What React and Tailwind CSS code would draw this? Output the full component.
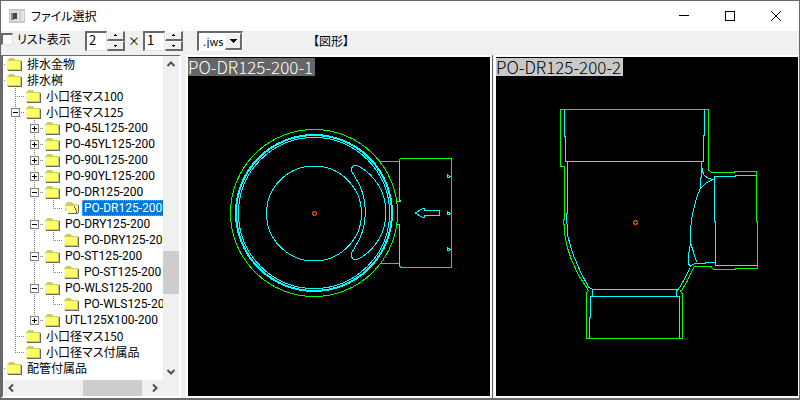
import React, { useState } from 'react';
import clsx from 'clsx';

// guides: one letter per indent column ("v" line through, "t" branch, "l" last branch, " " blank)
const treeRows = [
    { label: '排水金物', guides: '' },
    { label: '排水桝', guides: '' },
    { label: '小口径マス100', guides: 't' },
    { label: '小口径マス125', guides: 't', box: '-' },
    { label: 'PO-45L125-200', guides: 'vt', box: '+' },
    { label: 'PO-45YL125-200', guides: 'vt', box: '+' },
    { label: 'PO-90L125-200', guides: 'vt', box: '+' },
    { label: 'PO-90YL125-200', guides: 'vt', box: '+' },
    { label: 'PO-DR125-200', guides: 'vt', box: '-' },
    { label: 'PO-DR125-200', guides: 'vvl', open: true },
    { label: 'PO-DRY125-200', guides: 'vt', box: '-' },
    { label: 'PO-DRY125-200', guides: 'vvl' },
    { label: 'PO-ST125-200', guides: 'vt', box: '-' },
    { label: 'PO-ST125-200', guides: 'vvl' },
    { label: 'PO-WLS125-200', guides: 'vt', box: '-' },
    { label: 'PO-WLS125-200', guides: 'vvl' },
    { label: 'UTL125X100-200', guides: 'vl', box: '+' },
    { label: '小口径マス150', guides: 't' },
    { label: '小口径マス付属品', guides: 'l' },
    { label: '配管付属品', guides: '' },
];

const Guide = ({ kind, box }) => (
    <svg width="19" height="16" viewBox="0 0 19 16" fill="none" shapeRendering="crispEdges" className="block shrink-0">
        <g stroke="#808080" strokeDasharray="1 1">
            {kind !== ' ' && <path d={kind === 'l' ? 'M9.5 0V9' : 'M9.5 0V16'} />}
            {(kind === 't' || kind === 'l') && <path d="M9 8.5H19" />}
        </g>
        {box && (
            <>
                <rect x="5.5" y="4.5" width="8" height="8" fill="#fff" stroke="#808080" />
                <path d={box === '+' ? 'M7 8.5H12M9.5 6V11' : 'M7 8.5H12'} stroke="#000" />
            </>
        )}
    </svg>
);

const Folder = ({ open }) => (
    <svg width="17" height="14" viewBox="0 0 17 14" shapeRendering="crispEdges" className="block shrink-0">
        {open ? (
            <>
                <path d="M2 3H3V2H4V1H9V2H10V3H14V12H5L2 8Z" fill="#cccc66" />
                <path d="M1 5H11V6H12V8H13V10H14V12H5V11H4V9H3V7H2V6H1Z" fill="#ffff99" />
                <path d="M11 4H14V10H13V8H12V6H11Z" fill="#ffff66" />
                <path d="M15.5 4V12M5 12.5H15" fill="none" stroke="#666" />
                <path d="M11.5 5V7M12.5 7V9M13.5 9V12" fill="none" stroke="#666633" />
            </>
        ) : (
            <>
                <path d="M1 3H2V2H3V1H8V2H9V3H15V13H1Z" fill="#cccc66" />
                <rect x="2" y="5" width="12" height="7" fill="#ffff66" />
                <path d="M1 4.5H14M1.5 4V12" stroke="#fff" strokeOpacity=".7" />
                <path d="M15.5 4V14M2 13.5H16" stroke="#666" />
            </>
        )}
    </svg>
);

const TreeRow = ({ row, selected, onSelect }) => {
    const last = row.guides.length - 1;
    return (
        <li className="flex h-4 items-center" role="treeitem" aria-selected={selected}>
            <svg width="3" height="16" shapeRendering="crispEdges" className="block shrink-0">
                {last < 0 && <path d="M1 8.5H3" stroke="#808080" strokeDasharray="1 1" />}
            </svg>
            {row.guides.split('').map((kind, i) =>
                i === last && row.box ? (
                    <button key={i} type="button" aria-label={row.box === '+' ? '展開' : '折りたたむ'}>
                        <Guide kind={kind} box={row.box} />
                    </button>
                ) : (
                    <Guide key={i} kind={kind} />
                )
            )}
            <Folder open={row.open} />
            <button
                type="button"
                onClick={onSelect}
                className={clsx(
                    'ml-0.5 h-4 whitespace-nowrap px-0.5 text-xs leading-4',
                    last > 0 ? "font-['Roboto',sans-serif]" : "[font-feature-settings:'palt']",
                    selected && 'bg-[#0078d7] text-white outline-1 -outline-offset-1 outline-dotted outline-[#ff8728]'
                )}
            >
                {row.label}
            </button>
        </li>
    );
};

const Chevron = ({ d }) => (
    <svg width="16" height="16" viewBox="0 0 16 16" fill="none" stroke="#505050" strokeWidth="2" className="block">
        <path d={d} />
    </svg>
);

const Spinner = ({ label, value, onChange }) => (
    <div className="flex h-5 items-center">
        <input
            type="text"
            aria-label={label}
            value={value}
            onChange={(e) => onChange(Number(e.target.value) || 1)}
            className="h-full w-[22px] border-2 border-r border-b border-[#696969] border-r-[#e3e3e3] border-b-[#e3e3e3] bg-white pb-1 pl-0.5 text-[13px] leading-4"
        />
        <div className="flex h-full w-[18px] flex-col">
            {[1, -1].map((step) => (
                <button
                    key={step}
                    type="button"
                    aria-label={step > 0 ? '増やす' : '減らす'}
                    onClick={() => onChange(Math.max(1, value + step))}
                    className="flex flex-1 items-center justify-center border border-r-2 border-b-2 border-white border-r-[#696969] border-b-[#696969] bg-[#f0f0f0]"
                >
                    <svg width="5" height="3" viewBox="0 0 5 3" shapeRendering="crispEdges">
                        <path d={step > 0 ? 'M2 0H3V1H4V2H1V1H2Z' : 'M1 1H4V2H3V3H2V2H1Z'} />
                    </svg>
                </button>
            ))}
        </div>
    </div>
);

const TopView = () => (
    <svg viewBox="188 57 302 339" className="h-full w-full" fill="none" shapeRendering="crispEdges">
        <g stroke="#00ff00">
            <circle cx="314" cy="213" r="83.5" />
            <path d="M380 161.5H399.5V159.5L400.5 158.5H451.5V267.5H401L399.5 266V263.5H380" />
        </g>
        <g stroke="#00ffff">
            <circle cx="314" cy="213" r="78" strokeWidth="2" />
            <circle cx="314" cy="213" r="75.5" />
            <circle cx="314" cy="213.5" r="47.5" />
            <path d="M351.5 171V168L353.5 165.5H357.5A53 53 0 0 1 357.5 259.5H353.5L351.5 257V253L354.5 248A65 65 0 0 0 354.5 176Z" />
            <path d="M399.5 162V200.5H400.5V201.5H397M397 224.5H399.5V266" />
            <path d="M415.5 213L422.5 208.5H424.5V210.5H439.5V215.5H424.5V217.5H422.5Z" />
            <path d="M451 176.5H449.5L447.5 174.5V177.5H449.5M451 213H449.5L447.5 211.5V214.5H449.5M451 249H449.5L447.5 247.5V250.5H449.5" />
        </g>
        <path d="M313.5 211.5H315.5L316.5 213.5L315.5 215.5H313.5L312.5 213.5Z" stroke="#e63c00" />
    </svg>
);

const SideView = () => (
    <svg viewBox="496 57 302 339" className="h-full w-full" fill="none" shapeRendering="crispEdges">
        <g stroke="#00ff00">
            <path d="M708.5 109.5H560.5V166.5H564.5V219L563.5 220V223L564.5 226V233L567.5 248L571.5 260L578.5 275L588.5 290.5L586.5 292.5V338.5H682.5V294L680 291L682 290L687 281.5L693.5 268L694.5 266.5H711L713.5 269.5H735V268.5H757.5V221.5H756.5V171.5H734.5V172.5H712L708.5 170V109.5" />
        </g>
        <g stroke="#00ffff">
            <path d="M564.5 110V136.5H565.5V161.5H703.5V135.5H704.5V110" />
            <path d="M567.5 162V213H566.5V222.5L567.5 226V235L572.5 253L580.5 272L588.5 287L592.5 289.5H676.5V296M592.5 289V296" />
            <path d="M589.5 338V317.5H590.5V296.5H679.5V338" />
            <path d="M676.5 291.5L680 287L685 278L690 268" />
            <path d="M701.5 162V177L700.5 178V188L696.5 198L693.5 210L691.5 220L690.5 230V243L688.5 255V264L690.5 266L692.5 264.5L695 263.5H705V262.5H715.5" />
            <path d="M690.5 243L693.5 252L696.5 262" />
            <path d="M702 168V170L704 175L708.5 178.5L713.5 179.5L706.5 182.5L701 188" />
            <path d="M756 175.5H735V176.5H714.5V221.5H715.5V265.5H757" />
        </g>
        <path d="M634.5 220.5H636.5L637.5 222.5L636.5 224.5H634.5L633.5 222.5Z" stroke="#e63c00" />
    </svg>
);

const Preview = ({ name, active, children }) => (
    <section className="min-w-0 flex-1 border-2 border-r border-white bg-black">
        <div className="relative h-full">
            {children}
            <h2
                className={clsx(
                    'absolute top-px left-0 h-[18px] whitespace-nowrap pr-0.5 text-[17px] leading-[18px] font-light',
                    active ? 'bg-[#666] text-white' : 'bg-[#c8c8c8] text-black'
                )}
            >
                {name}
            </h2>
        </div>
    </section>
);

const App = () => {
    const [selected, setSelected] = useState(9);
    const [cols, setCols] = useState(2);
    const [rows, setRows] = useState(1);

    return (
        <div className="flex h-screen flex-col overflow-hidden border border-b-2 border-[#696969] bg-[#f0f0f0] font-['Noto_Sans_CJK_JP',sans-serif] text-xs text-black">
            <header className="flex h-[30px] shrink-0 items-center bg-white pl-2">
                <svg width="16" height="14" viewBox="0 0 16 14" className="mr-1.5">
                    <rect width="16" height="14" fill="#c8c8c8" />
                    <rect x="1" y="2" width="10" height="10" fill="#ddd" />
                    <rect x="2" y="4" width="3" height="7" fill="#888" />
                    <rect x="4" y="4" width="4" height="6" fill="#444" />
                    <rect x="12" y="2" width="3" height="10" fill="#e4e4e4" />
                </svg>
                <h1 className="flex-1 text-xs leading-4 [font-feature-settings:'palt']">ファイル選択</h1>
                <button type="button" aria-label="最小化" className="flex h-full w-[46px] items-center justify-center">
                    <svg width="10" height="10" stroke="#000" shapeRendering="crispEdges"><path d="M0 4.5H10" /></svg>
                </button>
                <button type="button" aria-label="最大化" className="flex h-full w-[46px] items-center justify-center">
                    <svg width="10" height="10" fill="none" stroke="#000" shapeRendering="crispEdges"><path d="M.5 .5H9.5V9.5H.5Z" /></svg>
                </button>
                <button type="button" aria-label="閉じる" className="flex h-full w-[46px] items-center justify-center">
                    <svg width="10" height="10" stroke="#000"><path d="M0 0L10 10M10 0L0 10" /></svg>
                </button>
            </header>

            <div className="flex h-6 shrink-0 items-start">
                <label className="flex w-[84px] items-center gap-1 leading-4 [font-feature-settings:'palt']">
                    <input type="checkbox" className="h-3 w-3 appearance-none border border-t-2 border-l-2 border-[#696969] border-r-[#e3e3e3] border-b-[#e3e3e3] bg-white checked:bg-gray-500" />
                    リスト表示
                </label>
                <Spinner label="列数" value={cols} onChange={setCols} />
                <span className="w-[18px] pt-0.5 text-center leading-4">×</span>
                <Spinner label="行数" value={rows} onChange={setRows} />
                <div className="relative ml-3.5 h-5 w-[46px]">
                    <select aria-label="拡張子" className="h-full w-full appearance-none border border-t-2 border-l-2 border-[#696969] border-r-white border-b-white bg-white pb-0.5 pl-1 text-[11px] leading-4">
                        <option>.jws</option>
                        <option>.jwk</option>
                    </select>
                    <span className="pointer-events-none absolute top-0.5 right-px bottom-px flex w-[17px] items-center justify-center border border-r-2 border-b-2 border-white border-r-[#696969] border-b-[#696969] bg-[#f0f0f0]">
                        <svg width="7" height="4" shapeRendering="crispEdges"><path d="M0 0H7V1H6V2H5V3H4V4H3V3H2V2H1V1H0Z" /></svg>
                    </span>
                </div>
                <span className="ml-[70px] pt-0.5 leading-4 [font-feature-settings:'palt']">【図形】</span>
            </div>

            <main className="flex min-h-0 flex-1">
                <nav className="mr-[5px] grid w-[180px] shrink-0 grid-cols-[1fr_16px] grid-rows-[1fr_16px] border-2 border-t border-white border-t-[#696969] border-l-[#696969]">
                    <ul role="tree" className="overflow-hidden bg-white">
                        {treeRows.map((row, i) => (
                            <TreeRow key={i} row={row} selected={i === selected} onSelect={() => setSelected(i)} />
                        ))}
                    </ul>
                    <div className="flex flex-col justify-between">
                        <Chevron d="M4.500 10L8 6.500L11.500 10" />
                        <div className="flex min-h-0 flex-1 flex-col">
                            <div className="flex-[178]" />
                            <div className="flex-[43] bg-[#cdcdcd]" />
                            <div className="flex-[70]" />
                        </div>
                        <Chevron d="M4.500 6L8 9.500L11.500 6" />
                    </div>
                    <div className="flex">
                        <Chevron d="M10 4.500L6.500 8L10 11.500" />
                        <div className="flex min-w-0 flex-1">
                            <div className="flex-[63]" />
                            <div className="flex-[59] bg-[#cdcdcd]" />
                            <div className="flex-[5]" />
                        </div>
                        <Chevron d="M6 4.500L9.500 8L6 11.500" />
                    </div>
                </nav>
                <Preview name="PO-DR125-200-1" active>
                    <TopView />
                </Preview>
                <div className="w-[3px] border-x border-[#f0f0f0] bg-[#696969]" />
                <Preview name="PO-DR125-200-2">
                    <SideView />
                </Preview>
            </main>
        </div>
    );
};

export default App;
